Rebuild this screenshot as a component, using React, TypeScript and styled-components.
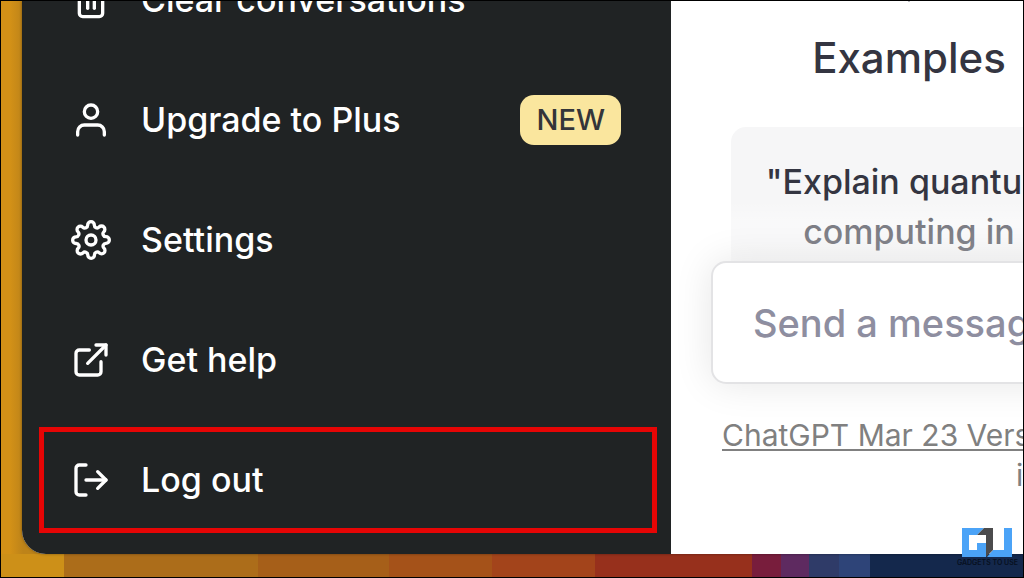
import React from "react";
import styled, { createGlobalStyle } from "styled-components";
import type { IconType } from "react-icons";
import { FiExternalLink, FiLogOut, FiSettings, FiSun, FiTrash2, FiUser } from "react-icons/fi";

const GlobalStyle = createGlobalStyle`
  *, *::before, *::after { box-sizing: border-box; }
  body {
    margin: 0;
    overflow: hidden;
    font-family: Inter, "Liberation Sans", sans-serif;
  }
`;

const Desktop = styled.div`
  position: relative;
  display: flex;
  height: 100vh;
  padding: 0 0 23px 21px;
  border: 1px solid #000;
  overflow: hidden;
  background:
    linear-gradient(
      90deg,
      #cd9018 0 6.2%,
      #ac6d1a 6.2% 25.1%,
      #a65f19 25.1% 38%,
      #a55219 38% 48%,
      #a3441b 48% 58.1%,
      #97301c 58.1% 73.5%,
      #781d3c 73.5% 76.3%,
      #5e2a60 76.3% 79.1%,
      #2f3b68 79.1% 82%,
      #2e4478 82% 85%,
      #14284c 85%
    ) bottom / 100% 23px no-repeat,
    linear-gradient(90deg, #d39117 0 9px, #bd8319 22px);
`;

const AppWindow = styled.div`
  flex: 1;
  min-width: 0;
  display: grid;
  grid-template-columns: minmax(0, 649fr) minmax(0, 352fr);
  grid-template-rows: minmax(0, 1fr);
  border-bottom-left-radius: 24px;
  overflow: hidden;
  background: #fff;
  box-shadow: 0 0 3px rgba(0, 0, 0, 0.4);
`;

const Sidebar = styled.nav`
  display: flex;
  flex-direction: column;
  justify-content: flex-end;
  gap: 14px;
  padding: 0 14px 21px 17px;
  overflow: hidden;
  background: #202324;
`;

const MenuButton = styled.button<{ $highlighted?: boolean }>`
  flex: none;
  display: flex;
  align-items: center;
  gap: 30px;
  width: 100%;
  height: 106px;
  padding: 0 31px 0 27px;
  border: 5px solid ${(p) => (p.$highlighted ? "#e60505" : "transparent")};
  background: transparent;
  color: #fff;
  font: 450 34px/40px Inter, "Liberation Sans", sans-serif;
  text-align: left;
  white-space: nowrap;
  cursor: pointer;

  svg { flex: none; }
`;

const MenuLabel = styled.span`
  flex: 1;
`;

const Badge = styled.span`
  padding: 0 16px;
  border-radius: 14px;
  background: #fae69e;
  color: #343539;
  font-size: 29px;
  font-weight: 500;
  line-height: 50px;
`;

const Main = styled.main`
  position: relative;
  overflow: hidden;
  background: #fff;
  color: #343541;
`;

const ExampleColumn = styled.section`
  display: flex;
  flex-direction: column;
  align-items: center;
  width: 356px;
  margin: -59px 0 0 60px;
`;

const ColumnTitle = styled.h2`
  margin: 30px 0 43px;
  font-size: 42px;
  font-weight: 450;
  line-height: 52px;
`;

const ExampleCard = styled.button`
  width: 100%;
  padding: 30px;
  border: 0;
  border-radius: 15px;
  background: #f6f6f7;
  color: inherit;
  font: 450 34px/50px Inter, "Liberation Sans", sans-serif;
  text-align: center;
  white-space: nowrap;
  cursor: pointer;
`;

const Line = styled.span`
  display: flex;
  justify-content: center;
`;

const Footer = styled.footer`
  position: absolute;
  inset: auto 0 0 0;
  padding: 70px 0 59px 40px;
  background: linear-gradient(
    180deg,
    rgba(255, 255, 255, 0) 10px,
    rgba(255, 255, 255, 0.35) 30px,
    rgba(255, 255, 255, 0.4) 60px,
    #fff 90px
  );
`;

const Composer = styled.input`
  display: block;
  width: calc(100% + 60px);
  height: 123px;
  margin-bottom: 31px;
  padding: 0 40px;
  border: 2px solid #e3e3e5;
  border-radius: 15px;
  outline: 0;
  background: #fff;
  box-shadow: 0 0 38px rgba(0, 0, 0, 0.1);
  color: #343541;
  font: 450 38px/50px Inter, "Liberation Sans", sans-serif;

  &::placeholder {
    color: #8e8ea0;
    opacity: 1;
  }
`;

const Note = styled.p`
  margin: 0;
  padding-left: 11px;
  color: #808080;
  font-size: 30px;
  line-height: 40px;
  white-space: nowrap;
`;

const NoteLink = styled.a`
  color: inherit;
  text-decoration: underline;
  text-decoration-thickness: 2px;
  text-underline-offset: 3px;
`;

const NoteEnd = styled.span`
  display: block;
  padding-left: 294px;
`;

const Watermark = styled.div`
  position: absolute;
  right: 5px;
  bottom: 9px;
  display: flex;
  flex-direction: column;
  align-items: center;
  color: #07101f;
  font-size: 7px;
  font-weight: 600;
  line-height: 11px;
  white-space: nowrap;

  svg { display: block; }
`;

interface MenuItem {
  label: string;
  icon: IconType;
  badge?: string;
  highlighted?: boolean;
}

const items: MenuItem[] = [
  { label: "Clear conversations", icon: FiTrash2 },
  { label: "Upgrade to Plus", icon: FiUser, badge: "NEW" },
  { label: "Settings", icon: FiSettings },
  { label: "Get help", icon: FiExternalLink },
  { label: "Log out", icon: FiLogOut, highlighted: true },
];

export default function App() {
  return (
    <>
      <GlobalStyle />
      <Desktop>
        <AppWindow>
          <Sidebar>
            {items.map(({ label, icon: Icon, badge, highlighted }) => (
              <MenuButton key={label} type="button" $highlighted={highlighted}>
                <Icon size={40} aria-hidden />
                <MenuLabel>{label}</MenuLabel>
                {badge && <Badge>{badge}</Badge>}
              </MenuButton>
            ))}
          </Sidebar>
          <Main>
            <ExampleColumn>
              <FiSun size={60} strokeWidth={1.5} aria-hidden />
              <ColumnTitle>Examples</ColumnTitle>
              <ExampleCard type="button">
                <Line>"Explain quantum</Line>
                <Line>computing in</Line>
                <Line>simple terms"</Line>
              </ExampleCard>
            </ExampleColumn>
            <Footer>
              <Composer type="text" aria-label="Send a message" placeholder="Send a message." />
              <Note>
                <NoteLink href="#">ChatGPT Mar 23 Version</NoteLink>
                <NoteEnd>improve.</NoteEnd>
              </Note>
            </Footer>
          </Main>
        </AppWindow>
        <Watermark>
          <svg width="50" height="29" viewBox="0 0 50 29" aria-hidden="true">
            <path fill="#4ba3f7" d="M0 0H22L15 7H7V22H15V15H24V29H0Z" />
            <path fill="#4ba3f7" d="M25 29L31 22H42V0H50V29Z" />
            <path fill="#4b4b4d" d="M22 0H31V22L24 29V7H15Z" />
          </svg>
          <span>GADGETS TO USE</span>
        </Watermark>
      </Desktop>
    </>
  );
}
